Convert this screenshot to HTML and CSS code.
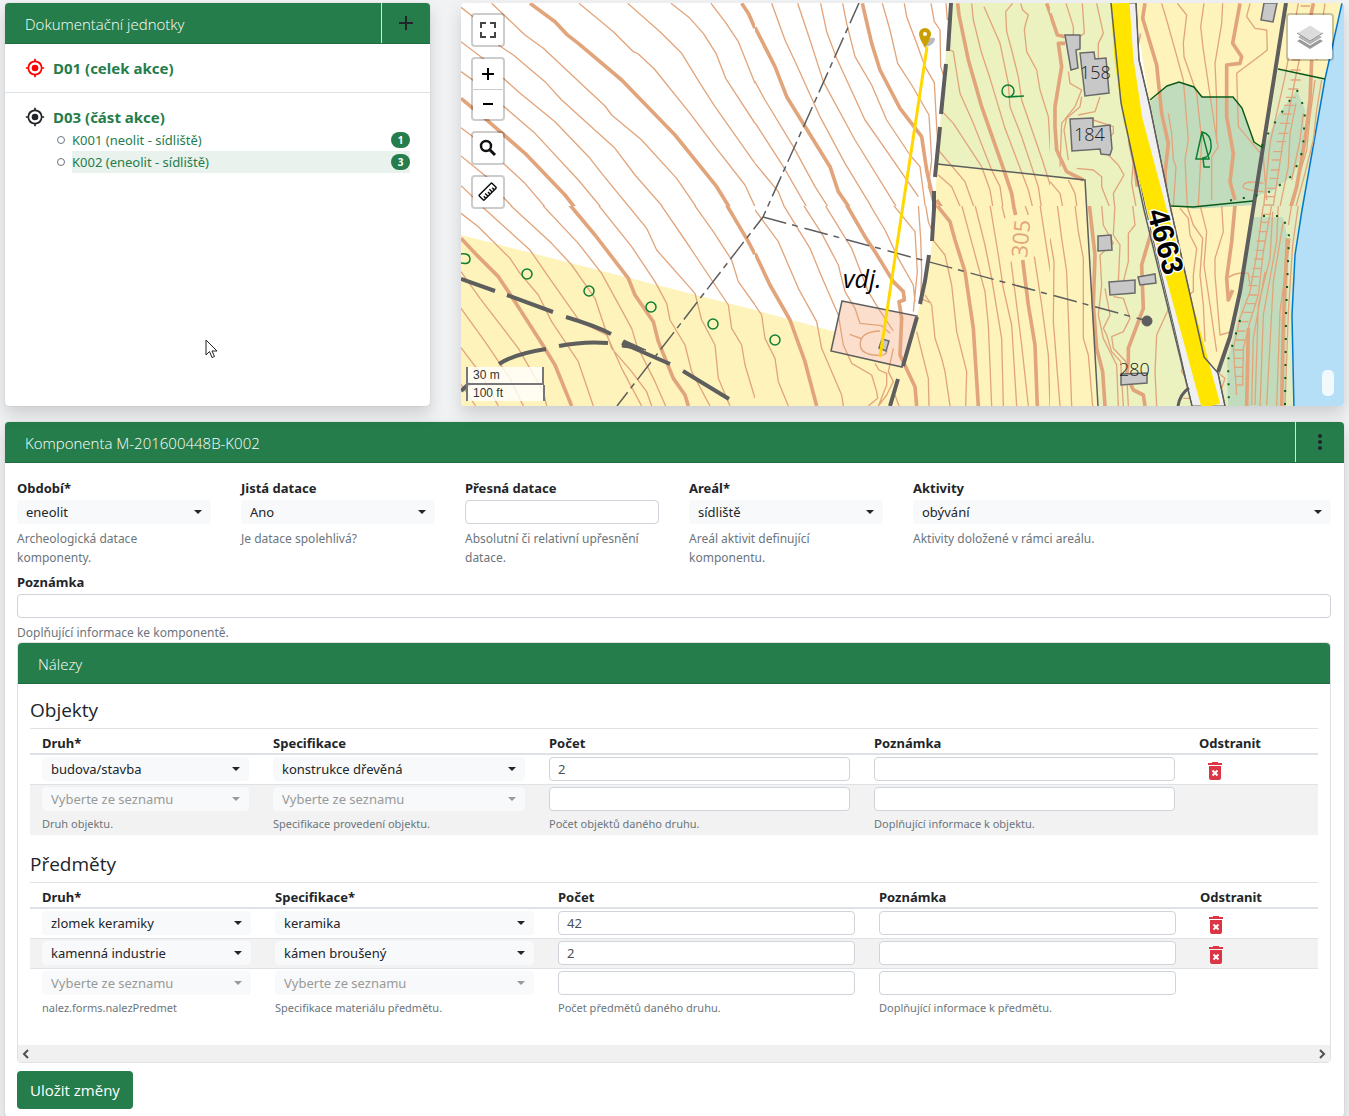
FILE: index.html
```html
<!DOCTYPE html>
<html lang="cs">
<head>
<meta charset="utf-8">
<meta name="viewport" content="width=device-width, initial-scale=1">
<title>Komponenta M-201600448B-K002</title>
<link rel="stylesheet" href="styles.css">
</head>
<body>
<svg class="sprite" aria-hidden="true">
  <symbol id="i-target" viewBox="0 0 24 24"><path d="M12 8a4 4 0 1 0 0 8 4 4 0 0 0 0-8zm8.94 3A8.99 8.99 0 0 0 13 3.060V1h-2v2.060A8.990 8.990 0 0 0 3.060 11H1v2h2.060A8.990 8.990 0 0 0 11 20.940V23h2v-2.060A8.990 8.990 0 0 0 20.940 13H23v-2zM12 19a7 7 0 1 1 0-14 7 7 0 0 1 0 14z"/></symbol>
  <symbol id="i-trash" viewBox="0 0 14 18"><path d="M4 0h6v1h4v2H0V1h4zM1 4h12v12q0 2-2 2H3q-2 0-2-2z"/><path d="M4.500 8.500l5 5m0-5l-5 5" stroke="#fff" stroke-width="2"/></symbol>
</svg>
<main class="page">
  <div class="top">
    <section class="card units">
      <header class="card-header">
        <h2 class="card-title">Dokumentační jednotky</h2>
        <button class="header-action" type="button" aria-label="Přidat"><svg width="16" height="16" viewBox="0 0 16 16"><path d="M8 1v14M1 8h14" stroke="currentColor" stroke-width="2"/></svg></button>
      </header>
      <div class="unit">
        <svg class="target red"><use href="#i-target"/></svg>
        <a class="unit-link" href="#d01">D01 (celek akce)</a>
      </div>
      <div class="unit">
        <svg class="target"><use href="#i-target"/></svg>
        <a class="unit-link" href="#d03">D03 (část akce)</a>
        <ul class="components">
          <li><a class="component" href="#k001"><span>K001 (neolit - sídliště)</span><span class="badge">1</span></a></li>
          <li><a class="component active" href="#k002"><span>K002 (eneolit - sídliště)</span><span class="badge">3</span></a></li>
        </ul>
      </div>
      <svg class="cursor" width="13" height="20" viewBox="0 0 13 20"><path d="M1 1v15l3.500-3.500 2.500 6 2.500-1-2.500-5.500h5z" fill="#fff" stroke="#222"/></svg>
    </section>

    <section class="map" aria-label="Mapa">
      <svg class="map-canvas" viewBox="461 3 883 403" preserveAspectRatio="xMidYMid slice" fill="none">
        <!-- land cover -->
        <rect x="461" y="3" width="883" height="403" fill="#fff"/>
        <path fill="#fef4bb" d="M461 235l294 75 77 21 85-15 13-55 5-56 2-41 149 16 12 226H461z"/>
        <path fill="#ecf1c0" d="M950 3h170v100l30 110 50 193H1098L1085 180 937 164z"/>
        <path fill="#fef4bb" d="M1134 3h209l-18 77-45-10-15 120-35 147-12 35-14-15-33-147-21-103z"/>
        <path fill="#e2ecc0" d="M1278 70l47 9-23 131-8 50-2 55 2 91h-72l-2-34 12-35 10-45z"/>
        <path fill="#c1dcbc" d="M1150 102l17-15 13-5 14 5 8 10 31 1 9 11 12 34 9 6-8 56-61 4-23-4z"/>
        <path fill="#c1dcbc" d="M1297 90l8 20-2 40-10 25-21 16-17 5 6-43 17-38zM1250 217l33 0 6 28-3 88-1 73h-57l-1-44 12-47z"/>
        <path fill="#b4dff6" stroke="#0078d0" stroke-width="1.500" d="M1342 3l-17 76-23 131-7 45-3 60 2 95h56V3z"/>
        <path fill="#fbdecb" d="M842 301l75 15-15 51-71-16z"/>

        <g class="contours">
          <svg x="455" y="0" width="300" height="206" viewBox="0 0 900 618">
            <path class="major" d="M225 10L300 65 335 103 370 130 500 240 660 405 785 560 828 630M18 295L90 355 210 460 330 585 365 630M860 10L880 40 900 85"/>
            <path d="M18 22L60 55M110 10L210 105 265 145 450 318 470 345 560 420 665 535 730 630M18 125L90 180M130 135L175 165 270 245 320 300 480 445 540 525 632 630M18 215L60 245M145 235L190 275 300 365 405 475 440 520 530 630M145 318L240 400 370 540 445 630M18 383L60 415M145 490L210 550 278 630M18 468L100 535M145 592L182 630M18 557L95 630M372 10L475 95 535 155 550 162 598 207 705 340 780 440 870 555 900 620M518 10L615 95 680 160 735 250 780 320 900 490M648 10L705 55 745 100 783 160 812 235 900 370M768 10L812 68 850 125 900 250"/>
          </svg>
          <svg x="755" y="0" width="295" height="206" viewBox="0 0 885 618">
            <path class="major" d="M0 82L60 200 95 290 225 500 250 575 288 630M322 10L350 130 375 210 435 325 500 410 515 510 535 600 545 630M608 10L612 45 640 180 680 320 745 505 770 580 778 630M875 10L900 80M900 350L897 420M545 600L565 630"/>
            <path d="M50 10L90 120 125 195 195 350 270 490 355 630M128 10L165 120 205 245 300 420 430 630M197 10L215 95 245 175 330 360 400 460 490 590M263 10L275 70 300 170 350 255 395 360 465 465 495 500 512 630M382 10L405 90 428 190 470 255 522 345 530 480 520 560 545 630M448 10L455 50 485 130 510 200 538 248 545 380 550 450 630 545 660 630M528 10L538 65 555 90 557 200 570 240 562 335 595 370 680 500 705 570 715 630M573 10L577 60M585 150L595 155 602 200 615 280 655 370 710 510 735 560 745 630M650 10L655 60 680 160 705 235 750 385 820 570 835 630M687 20L735 130 760 250 765 320 800 410 850 560 860 630M773 10L752 35 755 95 770 150 790 230 800 300 862 480 900 600M797 10L803 30 820 45 812 70 808 90 815 155 845 210 855 270 880 350 888 480 900 520M550 525L590 560 620 630M0 245L30 300 115 440 180 560 225 630M0 368L85 500 160 630M0 490L70 575 92 630"/>
          </svg>
          <svg x="1050" y="0" width="299" height="206" viewBox="0 0 897 618">
            <path class="major" d="M0 40L22 105 45 110M45 130H25L35 200 15 320 15 380 20 450 50 515 100 540M285 10L278 55 320 195 335 340 355 430 345 520 350 630M570 10L548 130 575 170 570 190 530 195 530 350 550 460 540 545 555 600M790 10L780 60M785 180L780 300 765 420 740 560 720 630M240 430L255 500 262 560"/>
            <path d="M48 10L70 80 70 110M97 10L103 100 90 110M140 10L160 100 145 130 145 185M55 215L60 250 95 270 75 320 35 370 30 500M95 290L90 320 50 355 42 390 55 480M150 290L135 335 85 345M130 360L190 380 190 400 180 410M80 505L130 510 155 530 155 560 182 630M175 465L205 495 222 525 190 580 195 630M335 10L350 60 378 160 400 240 415 420 405 480 412 620M382 10L410 45 400 130 402 170 440 280 455 420 445 620M462 10L452 80 460 150 500 420 505 440 485 470 485 600M518 10L515 70 495 190 500 300 500 430M600 10L590 50 615 85 650 90 652 150 620 175 560 220 565 380 640 470 650 600M355 340L365 400 370 480 378 500 370 620M272 100L262 150 275 300M640 550Q590 540 580 555T640 575M0 545L30 580 40 630M55 540L75 580 82 630M235 420L250 480 245 550 260 630M825 10L800 180M815 240L800 330 790 420 765 520 735 630M795 240L780 350 770 450 720 620M738 310L720 400 715 500 690 620M760 340L750 420 725 540M250 80L262 160 278 220"/>
            <path d="M745 10L705 230 660 430 640 630M790 10L765 100 735 240 700 420 668 630M752 18h28M725 180h25M722 210h30M722 240h30M715 267h30M708 292h30M702 316h30M695 342h30M690 370h30M685 400h30M680 425h28M670 455h28M665 480h28M662 510h28M658 535h28M652 565h28M645 590h28M640 615h28"/>
          </svg>
          <svg x="455" y="206" width="300" height="209" viewBox="0 3 900 627">
            <path class="major" d="M18 100L70 155 130 215 180 290 260 415 300 480 350 603M345 0L420 90 520 220 540 270 595 350 610 410 655 520 690 570 700 603M815 0L880 110 900 148"/>
            <path d="M18 25L70 65 165 160 195 205 250 270 290 350 370 470 415 603M85 8L225 135 280 215 375 350 455 390 500 490 560 603M165 0L290 115 350 180 420 280 470 430 530 500 575 560 590 603M262 0L370 115 440 205 530 370 545 420 600 530 632 603M430 0L530 125 600 230 635 295 645 345 690 420 710 500 765 603M518 0L575 70 605 135 720 265 740 345 780 420 790 520 825 603M618 0L690 105 720 150 820 300 830 370 860 420 870 480 900 580M718 0L775 80 830 165 850 230 900 300M18 200L75 280 190 430 265 560 275 603M18 310L90 410 165 520 205 603M18 428L80 510 130 603M18 538L62 603"/>
          </svg>
          <svg x="755" y="206" width="295" height="209" viewBox="0 3 885 627">
            <path class="major" d="M0 145L45 240 105 345 150 470 185 603M275 0L330 95 360 140 415 230 445 260 448 285 432 290 440 340 435 450 480 545 485 603M545 0L585 50 600 105 630 200 655 370 670 603M775 0L782 30M803 165L820 300 840 420 847 603"/>
            <path d="M0 300L20 330 30 400 60 460 70 530 100 603M0 15L70 110 130 250 185 350 200 430 260 570 265 603M85 0L165 130 200 215 250 330 265 420 290 475 350 510 365 560 368 580 340 603M145 0L200 85 250 180 270 260 300 310 315 355 380 362 405 385M210 0L290 130 340 260 370 310 415 378M345 0L390 75 430 160 475 240 480 290M415 0L480 80 487 200 475 320M490 0L497 100 500 200 497 280 530 295M512 0L520 50 530 75M530 100L570 150 590 240 605 380 635 500 632 603M620 0L655 130 690 260 700 360 710 603M660 0L690 120 710 220 740 400 745 603M705 0L730 150 745 250 770 360 785 603M740 0L750 40M768 170L785 300 800 420 820 603M810 0L820 30M838 155L860 300 880 450 885 603M855 0L900 290M510 270L530 300 540 400 560 460 570 500 585 603M485 380L500 440 520 520 522 603M284 388L322 402M375 378Q320 380 316 412T355 450 395 435M320 405M415 430L400 500 415 530 395 570 370 603M360 475L372 495 395 505 395 540 370 603M420 570L432 603"/>
          </svg>
          <svg x="1050" y="206" width="299" height="209" viewBox="0 3 897 627">
            <path class="major" d="M118 0L135 150 130 300 140 430 158 500 165 603M310 60L275 180 280 310 235 430 235 470 230 510 250 555 280 570 285 603M555 0L545 110 530 220 535 285 548 255M712 100L700 350 695 603M595 370L590 603"/>
            <path d="M0 100L12 170 10 350 30 603M22 0L35 100 50 200 65 603M75 0L85 80 100 160 100 400 115 450 128 603M155 0L160 60 190 115 150 150 155 240 145 330 160 400 180 440 200 480 205 603M195 0L190 90 210 120 205 230M248 0L255 60 235 85 235 170 220 230M190 275L220 280 240 340 220 380 185 395 190 430 228 470 235 603M165 250L180 330 160 370 170 390 185 440 212 470 220 603M370 280L320 390 315 500 320 603M405 420L395 500 415 530M400 580H420M390 10L415 40 420 90 440 130 430 210 430 260 415 270M410 0L430 60 458 100 450 210 460 300 465 410M450 0L470 80 462 180 480 300 500 440M515 0L520 80 495 160 495 210 510 390 545 380M530 220Q560 200 595 205L600 240M500 500L525 520 515 550 500 565M685 0L680 110 640 330 632 560 630 603M725 0L715 60M745 0L728 120 715 320 705 603M720 100L690 320 680 603M668 20L660 160 625 300 615 600M645 200L610 400 605 600M700 50L670 230 650 600"/>
            <path d="M640 0L620 150 600 260 570 340 550 430 560 570M665 0L640 140 625 270 600 350 580 430 578 540M635 28h28M630 52h28M625 80h28M620 108h28M616 136h28M612 162h28M608 190h25M602 215h25M595 242h28M598 270h24M590 296h25M580 322h26M570 350h26M560 378h26M558 405h26M553 435h26M553 460h26M553 487h26M555 514h26M556 540h24"/>
          </svg>
        </g>

        <!-- roads, tracks and boundaries -->
        <g stroke="#5e5e5e">
          <path d="M1136 3l3 57 11 47 21 103 33 147 14 16 7 33h-33l-17-75-30-125-11-55-14-148z" fill="#f0f0f0" stroke-width="1"/>
          <path d="M1120 3l4 57 9 60 24 90 25 90 29 106" stroke="#ffe500" stroke-width="19"/>
          <path d="M1111 3l10 100 23 107 48 196M1136 3l3 57 11 47 21 103 33 147 14 16 7 33" stroke-width="1.500"/>
          <path d="M1286 3l-33 207-13 82-10 45-12 35" stroke-width="4"/>
          <path d="M1178 406q2-12 11-18" stroke-width="3"/>
          <path d="M937 164l148 16 13 226" stroke-width="1.500"/>
          <path d="M951 3l-3 48M946 64l-5 50M940 127l-5 50M934 191v18l-2 32M929 255l-4 26-5 23M917 317l-14 49M898 379l-8 27" stroke-width="4"/>
          <path d="M461 279l34 12M507 295l46 17M566 317q30 9 45 17M622 343l48 21M683 371l46 28M461 391l9-8M499 364q15-10 47-15M559 346q25-5 49-3" stroke-width="4"/>
          <path d="M624 340l22 10-24-3z" fill="#5e5e5e"/>
          <path d="M859 3l-96 214-146 189" stroke-width="1.500" stroke-dasharray="22 5 6 5"/>
          <path d="M763 217l381 103" stroke-width="1.500" stroke-dasharray="24 6 6 7"/>
          <circle cx="1147" cy="321" r="5" fill="#5e5e5e"/>
          <path d="M842 301l75 15-15 51-71-16z" stroke-width="1.500"/>
        </g>
        <g fill="#c8c8c8" stroke="#6a6a6a" stroke-width="1.500">
          <path d="M1065 35h15v14l-4 1 2 18-7 2zM1080 53l14-1 1 7 11-1 3 35-24 3zM1070 119l23-1v9l17-2 2 24-2 6-9-1-1-5-28 2zM1098 236l13-1 1 15-14 1zM1109 282l26-2v13l-25 2zM1138 277l17-3 1 9-16 2zM1121 374l26-1v10l-26 2zM1264 3l-3 17 12 2 4-19zM882 339l7 2-3 10-7-3z"/>
        </g>
        <g stroke="#0e7f32" stroke-width="1.500">
          <path d="M461 254q9-1 9 5t-9 4"/><circle cx="527" cy="274" r="5"/><circle cx="589" cy="291" r="5"/><circle cx="651" cy="307" r="5"/><circle cx="713" cy="324" r="5"/><circle cx="775" cy="340" r="5"/>
          <circle cx="1008" cy="91" r="6"/><path d="M1008 97l16-1M1202 132l-6 27h13l-7-27q10 2 9 16-1 9-8 10l1 9h6"/>
        </g>
        <path stroke="#0a5a1a" stroke-width="1.500" d="M1150 100l17-14 12-4 15 5 8 10h31l9 11 12 34 9 6M1171 206l22 1 60-6M1278 69l47 10"/>
        <path stroke="#0a5a1a" stroke-width="2" stroke-dasharray="2 11" d="M1297 90l8 20-2 40-10 25-21 16-17 5-34 6M1290 100l-20 30-10 20M1263 216l20 0 6 20-3 80-1 90M1240 320l-12 40 1 46"/>

        <!-- labels -->
        <g class="map-labels">
          <text x="1080" y="79">158</text>
          <text x="1074" y="141">184</text>
          <text x="1119" y="376">280</text>
          <text class="elevation" transform="translate(1027 258) rotate(-85)">305</text>
          <text class="road" transform="translate(1147 212) rotate(75)">4663</text>
          <text class="place" x="843" y="288">vdj.</text>
        </g>
        <path d="M927 47l-47 310" stroke="#ffd800" stroke-width="3"/>
        <ellipse cx="930" cy="42" rx="6" ry="3" transform="rotate(-40 930 42)" fill="#777" opacity=".5"/>
        <path d="M925 48q-6-10-6-14a6 6 0 0 1 12 0q0 4-6 14z" fill="#c9a000"/><circle cx="925" cy="34" r="2" fill="#fff"/>
      </svg>

      <div class="controls">
        <button class="control" type="button" aria-label="Celá obrazovka"><svg width="18" height="18" viewBox="0 0 18 18"><path d="M2 7V2h5M11 2h5v5M16 11v5h-5M7 16H2v-5" fill="none" stroke="#444" stroke-width="2"/></svg></button>
        <div class="control-group">
          <button class="control" type="button" aria-label="Přiblížit"><svg width="14" height="14" viewBox="0 0 14 14"><path d="M7 1v12M1 7h12" stroke="#000" stroke-width="2"/></svg></button>
          <button class="control" type="button" aria-label="Oddálit"><svg width="14" height="14" viewBox="0 0 14 14"><path d="M2 6h10" stroke="#000" stroke-width="2"/></svg></button>
        </div>
        <button class="control" type="button" aria-label="Hledat"><svg width="18" height="18" viewBox="0 0 18 18"><circle cx="7" cy="7" r="5" fill="none" stroke="#111" stroke-width="2.500"/><path d="M11 11l5 5" stroke="#111" stroke-width="3"/></svg></button>
        <button class="control" type="button" aria-label="Měřit"><svg width="20" height="20" viewBox="0 0 20 20"><g transform="rotate(-45 10 10)" fill="none" stroke="#111" stroke-width="1.500"><rect x="1" y="6" width="18" height="7" rx="1"/><path d="M4 13v-3M7 13v-4M10 13v-3M13 13v-4M16 13v-3"/></g></svg></button>
      </div>
      <button class="control layers" type="button" aria-label="Vrstvy"><svg width="28" height="28" viewBox="0 0 28 28"><path d="M1 18l13-7 13 7-13 8z" fill="#999"/><path d="M1 14l13-7 13 7-13 8z" fill="#b4b4b4" stroke="#fff"/><path d="M1 10l13-8 13 8-13 8z" fill="#dcdcdc" stroke="#fff"/><path d="M1 10l13 8 13-8" fill="none" stroke="#888"/></svg></button>
      <div class="scale"><span>30 m</span><span>100 ft</span></div>
      <div class="attribution"></div>
    </section>
  </div>

  <form class="card detail">
    <header class="card-header">
      <h2 class="card-title">Komponenta M-201600448B-K002</h2>
      <button class="header-action" type="button" aria-label="Další akce"><svg width="4" height="16" viewBox="0 0 4 16" fill="currentColor"><circle cx="2" cy="2" r="2"/><circle cx="2" cy="8" r="2"/><circle cx="2" cy="14" r="2"/></svg></button>
    </header>
    <div class="detail-body">
      <div class="fields">
        <div class="field"><label for="f-obdobi">Období*</label><select id="f-obdobi"><option>eneolit</option></select><p class="help">Archeologická datace komponenty.</p></div>
        <div class="field"><label for="f-jista">Jistá datace</label><select id="f-jista"><option>Ano</option></select><p class="help">Je datace spolehlivá?</p></div>
        <div class="field"><label for="f-presna">Přesná datace</label><input id="f-presna" type="text"><p class="help">Absolutní či relativní upřesnění datace.</p></div>
        <div class="field"><label for="f-areal">Areál*</label><select id="f-areal"><option>sídliště</option></select><p class="help">Areál aktivit definující komponentu.</p></div>
        <div class="field wide"><label for="f-aktivity">Aktivity</label><select id="f-aktivity"><option>obývání</option></select><p class="help">Aktivity doložené v rámci areálu.</p></div>
        <div class="field full"><label for="f-pozn">Poznámka</label><input id="f-pozn" type="text"><p class="help">Doplňující informace ke komponentě.</p></div>
      </div>

      <section class="finds">
        <header class="card-header"><h2 class="card-title">Nálezy</h2></header>
        <div class="finds-body">
          <h3>Objekty</h3>
          <table class="objects">
            <colgroup><col class="c-kind"><col class="c-spec"><col class="c-count"><col class="c-note"><col class="c-del"></colgroup>
            <thead><tr><th>Druh*</th><th>Specifikace</th><th>Počet</th><th>Poznámka</th><th>Odstranit</th></tr></thead>
            <tbody>
              <tr>
                <td><select aria-label="Druh"><option>budova/stavba</option></select></td>
                <td><select aria-label="Specifikace"><option>konstrukce dřevěná</option></select></td>
                <td><input type="text" aria-label="Počet" value="2"></td>
                <td><input type="text" aria-label="Poznámka"></td>
                <td><button class="delete" type="button" aria-label="Odstranit"><svg><use href="#i-trash"/></svg></button></td>
              </tr>
              <tr>
                <td><select class="empty" aria-label="Druh"><option>Vyberte ze seznamu</option></select><p class="hint">Druh objektu.</p></td>
                <td><select class="empty" aria-label="Specifikace"><option>Vyberte ze seznamu</option></select><p class="hint">Specifikace provedení objektu.</p></td>
                <td><input type="text" aria-label="Počet"><p class="hint">Počet objektů daného druhu.</p></td>
                <td><input type="text" aria-label="Poznámka"><p class="hint">Doplňující informace k objektu.</p></td>
                <td></td>
              </tr>
            </tbody>
          </table>
          <h3>Předměty</h3>
          <table class="items">
            <colgroup><col class="c-kind"><col class="c-spec"><col class="c-count"><col class="c-note"><col class="c-del"></colgroup>
            <thead><tr><th>Druh*</th><th>Specifikace*</th><th>Počet</th><th>Poznámka</th><th>Odstranit</th></tr></thead>
            <tbody>
              <tr>
                <td><select aria-label="Druh"><option>zlomek keramiky</option></select></td>
                <td><select aria-label="Specifikace"><option>keramika</option></select></td>
                <td><input type="text" aria-label="Počet" value="42"></td>
                <td><input type="text" aria-label="Poznámka"></td>
                <td><button class="delete" type="button" aria-label="Odstranit"><svg><use href="#i-trash"/></svg></button></td>
              </tr>
              <tr>
                <td><select aria-label="Druh"><option>kamenná industrie</option></select></td>
                <td><select aria-label="Specifikace"><option>kámen broušený</option></select></td>
                <td><input type="text" aria-label="Počet" value="2"></td>
                <td><input type="text" aria-label="Poznámka"></td>
                <td><button class="delete" type="button" aria-label="Odstranit"><svg><use href="#i-trash"/></svg></button></td>
              </tr>
              <tr>
                <td><select class="empty" aria-label="Druh"><option>Vyberte ze seznamu</option></select><p class="hint">nalez.forms.nalezPredmet</p></td>
                <td><select class="empty" aria-label="Specifikace"><option>Vyberte ze seznamu</option></select><p class="hint">Specifikace materiálu předmětu.</p></td>
                <td><input type="text" aria-label="Počet"><p class="hint">Počet předmětů daného druhu.</p></td>
                <td><input type="text" aria-label="Poznámka"><p class="hint">Doplňující informace k předmětu.</p></td>
                <td></td>
              </tr>
            </tbody>
          </table>
        </div>
        <div class="scrollbar">
          <svg width="8" height="10" viewBox="0 0 8 10"><path d="M6 1L2 5l4 4" fill="none" stroke="#505050" stroke-width="2"/></svg>
          <svg width="8" height="10" viewBox="0 0 8 10"><path d="M2 1l4 4-4 4" fill="none" stroke="#505050" stroke-width="2"/></svg>
        </div>
      </section>
      <button class="save" type="submit">Uložit změny</button>
    </div>
  </form>
</main>
</body>
</html>
```
FILE: styles.css
```css
:root {
  --green: #257d4b;
  --line: #dee2e6;
  --text: #212529;
  --muted: #6c757d;
}

* { box-sizing: border-box; }

body {
  margin: 0;
  background: #f1f2f4;
  color: var(--text);
  font: 13px/20px "Noto Sans", "Open Sans", sans-serif;
}

h2, h3, p, ul { margin: 0; }
a { color: var(--green); text-decoration: none; }
button, input, select { font: inherit; color: inherit; }
.sprite { display: none; }

.page {
  display: flex;
  flex-direction: column;
  gap: 16px;
  padding: 3px 5px 0;
  min-height: 100vh;
}

.top {
  display: grid;
  grid-template-columns: 425fr 883fr;
  gap: 31px;
}

.card {
  background: #fff;
  border-radius: 4px;
  box-shadow: 0 8px 16px rgba(0, 0, 0, .15), 0 0 1px rgba(0, 0, 0, .3);
}

.card-header {
  display: flex;
  justify-content: space-between;
  height: 41px;
  background: var(--green);
  border-bottom: 1px solid #1f6c40;
  border-radius: 4px 4px 0 0;
  color: #fff;
}

.card-title {
  padding-left: 20px;
  font: 300 15px/43px "Open Sans", "Noto Sans", sans-serif;
}

.header-action {
  display: grid;
  place-items: center;
  width: 49px;
  padding: 0;
  background: none;
  border: 0;
  border-left: 1px solid #d5e6db;
  color: var(--text);
}

/* documentation units */
.units { position: relative; }

.unit {
  display: grid;
  grid-template-columns: 20px 1fr;
  column-gap: 8px;
  align-items: center;
  padding: 14px 20px;
}

.unit + .unit { border-top: 1px solid var(--line); }
.target { width: 20px; height: 20px; fill: var(--text); }
.target.red { fill: #f00; }
.unit-link { font-size: 15px; font-weight: 700; }

.components {
  grid-column: 1 / -1;
  margin-top: 2px;
  padding-left: 32px;
  list-style: none;
}

.components li {
  display: flex;
  align-items: center;
  gap: 7px;
}

.components li::before {
  content: "";
  width: 6px;
  height: 6px;
  border: 1px solid var(--muted);
  border-radius: 50%;
}

.component {
  flex: 1;
  display: flex;
  justify-content: space-between;
  align-items: center;
  height: 22px;
}

.component.active { background: #e9f2ed; }

.badge {
  width: 19px;
  background: var(--green);
  border-radius: 8px;
  color: #fff;
  font-size: 10px;
  font-weight: 700;
  line-height: 16px;
  text-align: center;
}

.cursor { position: absolute; left: 200px; top: 336px; }

/* map */
.map {
  position: relative;
  height: 403px;
  overflow: hidden;
  border-radius: 4px;
  box-shadow: 0 8px 16px rgba(0, 0, 0, .15);
}

.map-canvas { display: block; width: 100%; height: 100%; }
.contours { stroke: #e2a57b; stroke-width: 4; stroke-linejoin: round; }
.contours .major { stroke-width: 11; }

.map-labels { fill: #222; font: 18px "Open Sans", sans-serif; font-weight: 300; }
.map-labels .elevation {
  fill: #e2a57b;
  stroke: #fef4bb;
  stroke-width: 4;
  paint-order: stroke;
  font-size: 22px;
  font-weight: 400;
}
.map-labels .place { fill: #000; font-size: 25px; font-style: italic; font-weight: 400; }
.map-labels .road {
  fill: #000;
  stroke: #fff;
  stroke-width: 3;
  paint-order: stroke;
  font: 700 30px "Liberation Sans", sans-serif;
}

.controls {
  position: absolute;
  left: 10px;
  top: 10px;
  display: flex;
  flex-direction: column;
  gap: 10px;
}

.control {
  display: grid;
  place-items: center;
  width: 34px;
  height: 34px;
  padding: 0;
  background: #fff;
  background-clip: padding-box;
  border: 2px solid rgba(0, 0, 0, .2);
  border-radius: 4px;
}

.control-group .control:first-child { height: 32px; border-bottom: 0; border-radius: 4px 4px 0 0; }
.control-group .control:last-child { height: 32px; border-top: 1px solid #ccc; border-radius: 0 0 4px 4px; }
.control.layers { position: absolute; right: 10px; top: 10px; width: 48px; height: 48px; }

.scale {
  position: absolute;
  left: 5px;
  bottom: 5px;
  width: 79px;
  color: #333;
  font: 12px/16px "Liberation Sans", sans-serif;
}

.scale span {
  display: block;
  padding-left: 5px;
  background: rgba(255, 255, 255, .8);
  border: 2px solid #777;
  border-top: 0;
}

.scale span:first-child { width: 78px; }
.scale span:last-child { border-bottom: 0; }

.attribution {
  position: absolute;
  right: 10px;
  bottom: 10px;
  width: 12px;
  height: 26px;
  background: rgba(255, 255, 255, .8);
  border-radius: 5px;
}

/* component form */
.detail { flex: 1; }
.detail-body { padding: 15px 13px 8px 12px; }

.fields {
  display: grid;
  grid-template-columns: repeat(12, 1fr);
  gap: 5px 30px;
}

.field { grid-column: span 2; }
.field.wide { grid-column: span 4; }
.field.full { grid-column: 1 / -1; }
.field label { display: block; margin-bottom: 2px; font-weight: 700; }

input, select {
  display: block;
  width: 100%;
  height: 24px;
  padding: 0 8px;
  background: #fff;
  border: 1px solid #ced4da;
  border-radius: 4px;
}

input { color: #495057; }

select {
  appearance: none;
  background: #f8f9fa url("data:image/svg+xml,%3Csvg xmlns='http://www.w3.org/2000/svg' width='8' height='4'%3E%3Cpath d='M0 0h8L4 4z' fill='%23212529'/%3E%3C/svg%3E") no-repeat right 8px center;
  border-color: #f8f9fa;
}

select.empty {
  background-image: url("data:image/svg+xml,%3Csvg xmlns='http://www.w3.org/2000/svg' width='8' height='4'%3E%3Cpath d='M0 0h8L4 4z' fill='%23999'/%3E%3C/svg%3E");
  color: #999;
}

.help { margin-top: 5px; color: var(--muted); font-size: 12px; line-height: 19px; }
.hint { margin-top: 5px; color: var(--muted); font-size: 11px; line-height: 16px; }

.finds { border: 1px solid var(--line); border-radius: 4px; }
.finds-body { padding: 12px 12px 26px; }
.finds h3 { font: 400 19px/28px "Open Sans", "Noto Sans", sans-serif; margin-bottom: 4px; }

table {
  width: 100%;
  table-layout: fixed;
  border-collapse: separate;
  border-spacing: 0;
}

.finds table + h3 { margin-top: 15px; }
th {
  padding: 4px 12px 0;
  border-top: 1px solid var(--line);
  border-bottom: 2px solid var(--line);
  text-align: left;
}
td { padding: 2px 12px 3px; vertical-align: top; border-bottom: 1px solid var(--line); }
tbody tr:last-child td { border-bottom: 0; }
tbody tr:nth-child(even) { background: #f2f2f2; }

.objects .c-kind { width: 231px; }
.objects .c-spec { width: 276px; }
.objects .c-count, .objects .c-note { width: 325px; }
.objects .c-del { width: 131px; }
.items .c-kind { width: 233px; }
.items .c-spec { width: 283px; }
.items .c-count, .items .c-note { width: 321px; }
.items .c-del { width: 130px; }

.delete {
  display: block;
  height: 24px;
  padding: 4px 9px 0;
  background: none;
  border: 0;
}

.delete svg { display: block; width: 14px; height: 18px; fill: #dc3545; }

.scrollbar {
  display: flex;
  justify-content: space-between;
  align-items: center;
  height: 17px;
  padding: 0 4px;
  background: #f0f0f0;
}

.save {
  height: 38px;
  margin-top: 8px;
  padding: 0 13px;
  background: var(--green);
  border: 0;
  border-radius: 4px;
  color: #fff;
  font: 400 15px "Open Sans", "Noto Sans", sans-serif;
}
```
